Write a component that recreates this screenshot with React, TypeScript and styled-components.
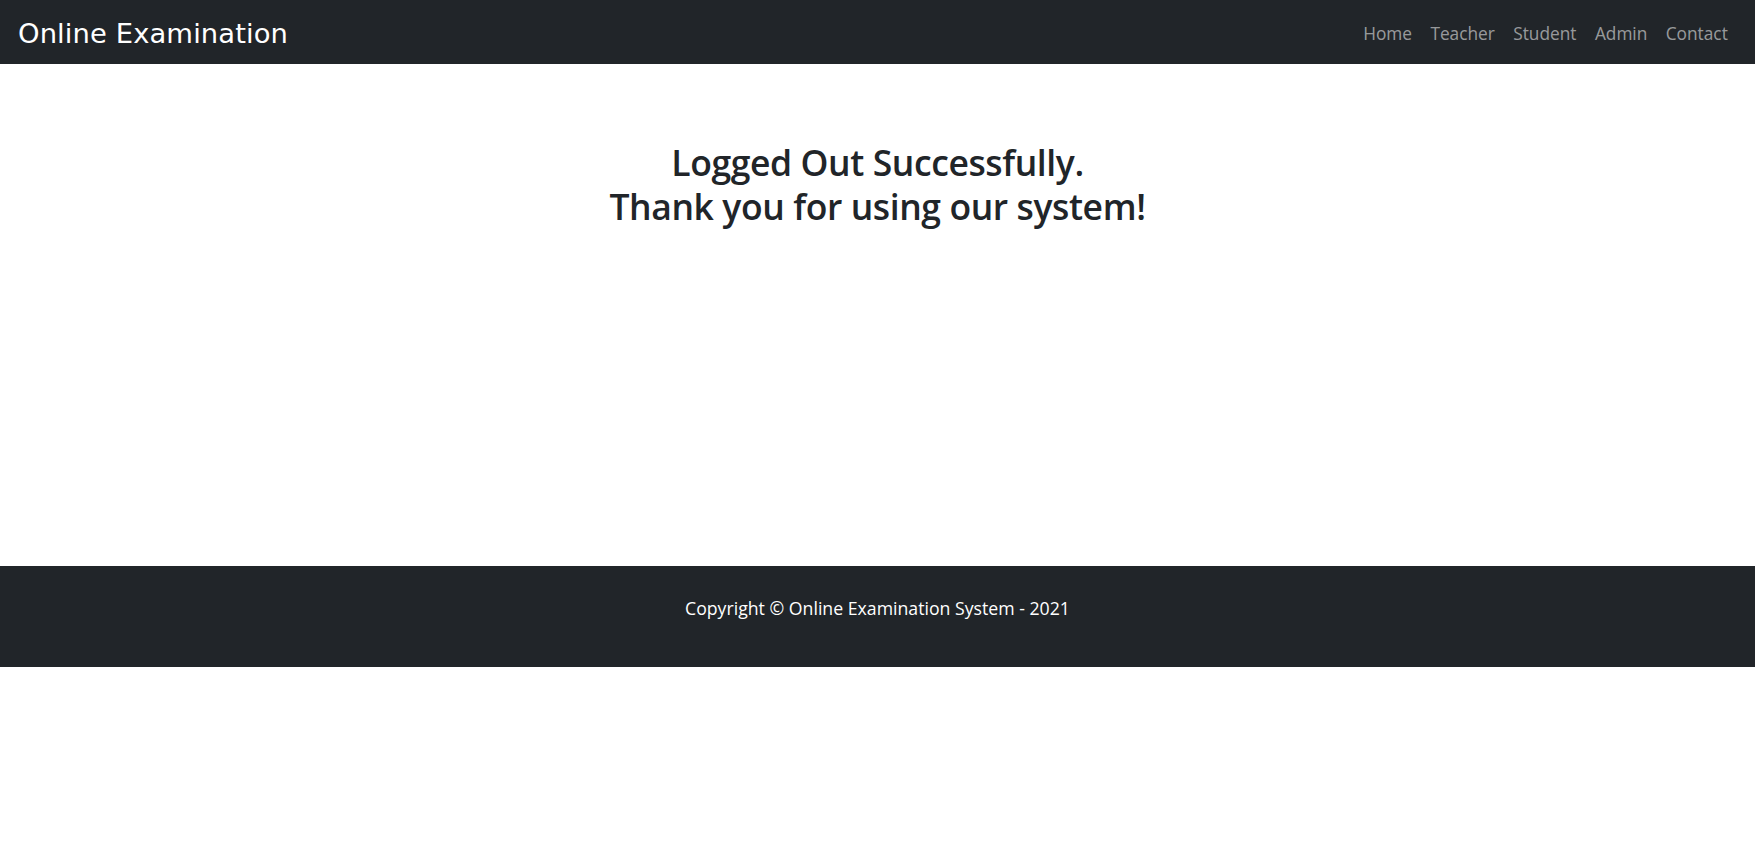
import React from "react";
import styled, { createGlobalStyle } from "styled-components";

const GlobalStyle = createGlobalStyle`
  html, body {
    margin: 0;
    padding: 0;
    background: #fff;
  }
  body {
    font-family: "Open Sans", "Noto Sans", sans-serif;
    color: #212529;
  }
  * {
    box-sizing: border-box;
  }
`;

const Navbar = styled.nav`
  height: 64px;
  background-color: #212529;
  display: flex;
  align-items: center;
  justify-content: space-between;
  padding: 2px 18px 0;
`;

const Brand = styled.a`
  font-family: "DejaVu Sans", Verdana, sans-serif;
  font-size: 27.4px;
  color: #fff;
  text-decoration: none;
  letter-spacing: 0.1px;
`;

const NavList = styled.ul`
  display: flex;
  list-style: none;
  margin: 0;
  padding: 0;
`;

const NavLink = styled.a`
  display: block;
  padding: 8px 9.2px;
  font-size: 17.3px;
  color: rgba(255, 255, 255, 0.55);
  text-decoration: none;
  cursor: pointer;
  &:hover {
    color: rgba(255, 255, 255, 0.75);
  }
`;

const Main = styled.main`
  height: 502px;
  padding-top: 76px;
  text-align: center;
`;

const Title = styled.h2`
  margin: 0;
  font-size: 35.5px;
  font-weight: 600;
  line-height: 44px;
  letter-spacing: -0.4px;
`;

const Footer = styled.footer`
  height: 101px;
  background-color: #212529;
  display: flex;
  justify-content: center;
  padding-top: 30px;
`;

const FooterText = styled.p`
  margin: 0;
  color: #fff;
  font-size: 17.7px;
  line-height: 24px;
`;

const links = ["Home", "Teacher", "Student", "Admin", "Contact"];

export default function App() {
  return (
    <>
      <GlobalStyle />
      <Navbar>
        <Brand>Online Examination</Brand>
        <NavList>
          {links.map((l) => (
            <li key={l}>
              <NavLink>{l}</NavLink>
            </li>
          ))}
        </NavList>
      </Navbar>
      <Main>
        <Title>
          Logged Out Successfully.
          <br />
          Thank you for using our system!
        </Title>
      </Main>
      <Footer>
        <FooterText>Copyright © Online Examination System - 2021</FooterText>
      </Footer>
    </>
  );
}
